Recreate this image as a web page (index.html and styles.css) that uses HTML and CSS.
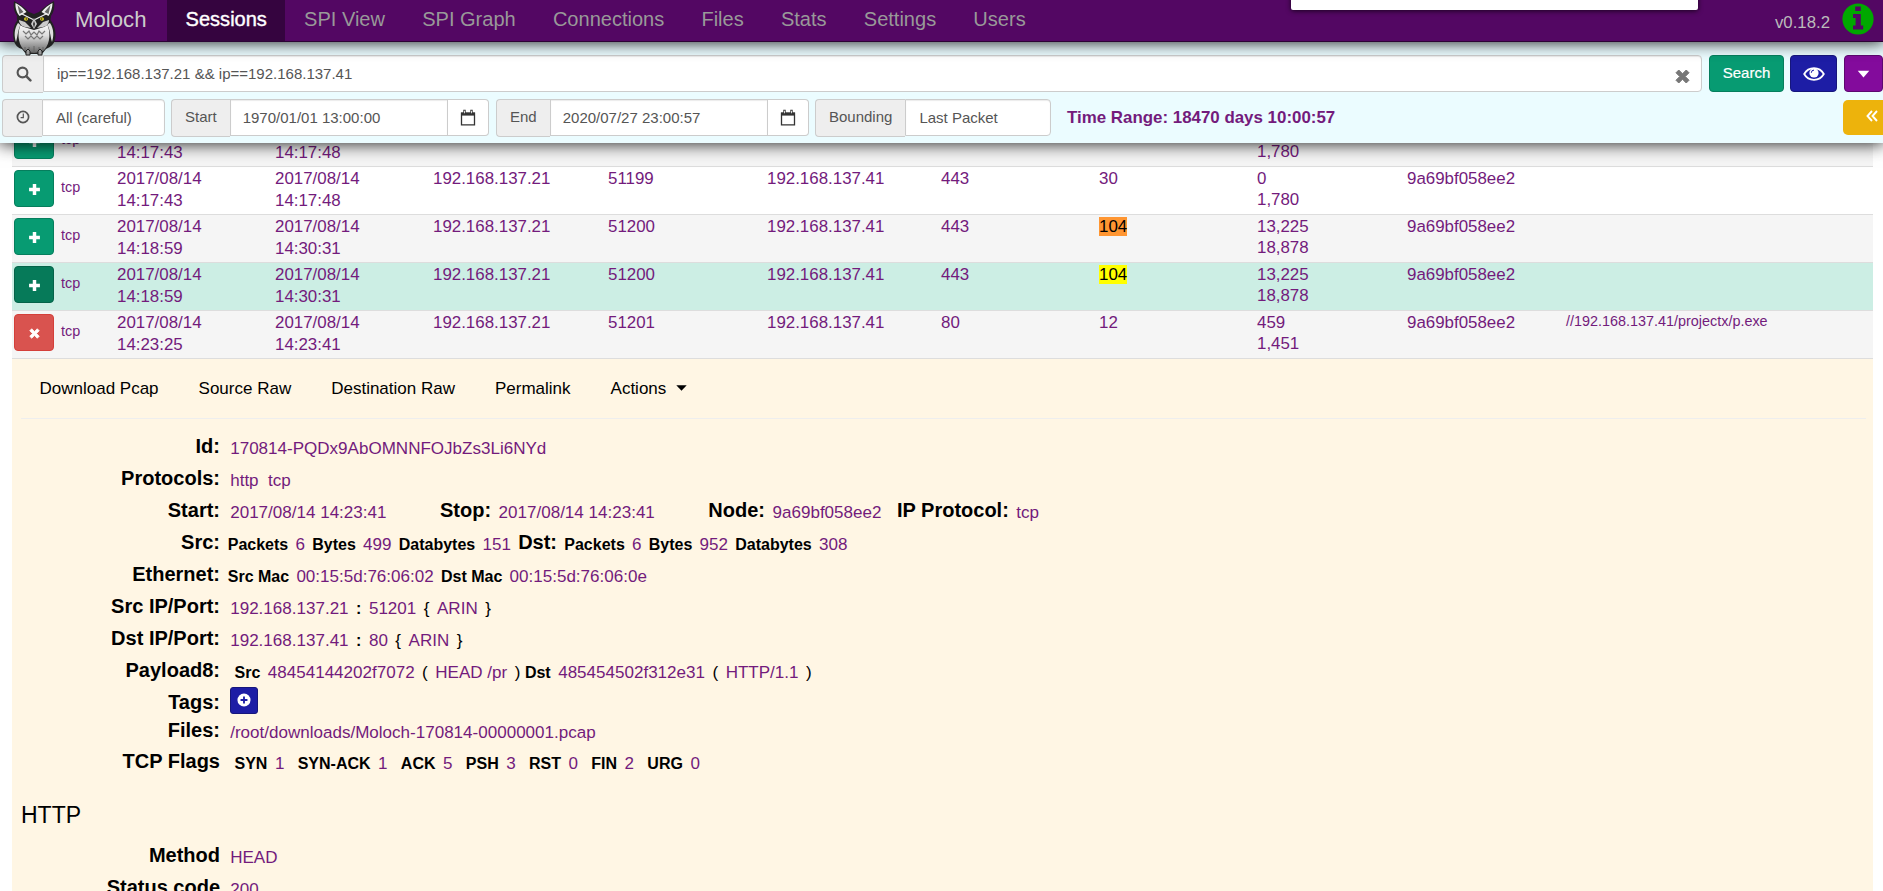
FILE: index.html
```html
<!DOCTYPE html>
<html lang="en">
<head>
<meta charset="utf-8">
<title>Moloch - Sessions</title>
<link rel="stylesheet" href="styles.css">
</head>
<body>
<svg class="defs" width="0" height="0">
  <symbol id="plus" viewBox="0 0 12 12"><path d="M4.4 1h3.2v3.4H11v3.2H7.6V11H4.4V7.6H1V4.4h3.4z"/></symbol>
  <symbol id="times" viewBox="0 0 12 12"><path d="M3 0.8 6 3.8 9 0.8 11.2 3 8.2 6l3 3L9 11.2l-3-3-3 3L.8 9l3-3-3-3z" stroke="currentColor" stroke-width=".8" stroke-linejoin="round"/></symbol>
  <symbol id="calendar" viewBox="0 0 16 17"><path d="M1.5 4.2h13v11.6h-13z" fill="none" stroke="currentColor" stroke-width="1.3"/><path d="M1 3.6h14v3H1z"/><path d="M3.3.8h2.4v4H3.3zM10.3.8h2.4v4h-2.4z"/><path d="M4.1 1.8h.8v2.4h-.8zM11.1 1.8h.8v2.4h-.8z" fill="#fff"/></symbol>
</svg>

<header class="header">
  <nav class="navbar">
    <svg class="owl" viewBox="0 0 46 56">
      <defs>
        <linearGradient id="belly" x1="0" y1="0" x2="0" y2="1"><stop offset="0" stop-color="#fff"/><stop offset=".45" stop-color="#ddd"/><stop offset="1" stop-color="#666"/></linearGradient>
      </defs>
      <path d="M9 17C2 24 1 33 3 41c1 4 4 7 8 8l4 5h16l4-5c5-2 8-5 9-9 2-8-1-17-7-23z" fill="#222"/>
      <path d="M7 23c-4 6-4 13-2 19 2-7 2-13 5-18zM39 23c4 6 4 13 2 19-2-7-2-13-5-18z" fill="#ddd"/>
      <path d="M10 24c4-3 22-3 26 0 4 8 3 19-2 25-4 5-18 5-22 0-5-6-6-17-2-25z" fill="url(#belly)"/>
      <path d="M3 1c6 3 11 7 15 11l5 2 5-2C32 8 37 4 43 1c1 6 0 11-3 15 0 5-3 9-7 11l-10 3-10-3c-5-2-8-6-7-11C3 12 2 7 3 1z" fill="#222"/>
      <path d="M4.500 3c4 2 8 5 11 9l-7 4C6 13 4 8 4.500 3zM41.500 3c-4 2-8 5-11 9l7 4c2-3 4-8 4-13z" fill="#eee"/>
      <path d="M6.500 5l6 7-4 2zM39.500 5l-6 7 4 2z" fill="#666"/>
      <path d="M8 20l6 2 6 6-6-1c-4-1-6-4-6-7zM38 20l-6 2-6 6 6-1c4-1 6-4 6-7z" fill="#ccc"/>
      <path d="M10 13.500l12 6M36 13.500l-12 6" stroke="#eee" stroke-width="1.300"/>
      <ellipse cx="15" cy="19" rx="2" ry="1.700" fill="#d9cb21"/><ellipse cx="31" cy="19" rx="2" ry="1.700" fill="#d9cb21"/>
      <circle cx="15.300" cy="19" r=".7" fill="#222"/><circle cx="30.700" cy="19" r=".7" fill="#222"/>
      <path d="M23 18l3 6-3 5-3-5z" fill="#ccc"/><path d="M23 21l1 3-1 4-1-4z" fill="#333"/>
      <path d="M12 31l3 3 3-3 2 4 3-3 3 3 2-4 3 3 3-3M14 36l3 3 3-3 3 3 3-3 3 3 3-3" fill="none" stroke="#777" stroke-width="1.200"/>
      <path d="M14 47v4M18 47v6M23 46v7M28 47v6M32 47v4" stroke="#666" stroke-width="1"/>
      <path d="M15 51l2-2 2 2v4h-4zM27 51l2-2 2 2v4h-4z" fill="#999" stroke="#222"/>
    </svg>
    <span class="brand">Moloch</span>
    <a class="tab active">Sessions</a><a class="tab">SPI View</a><a class="tab">SPI Graph</a><a class="tab">Connections</a><a class="tab">Files</a><a class="tab">Stats</a><a class="tab">Settings</a><a class="tab">Users</a>
    <div class="popup"></div>
    <span class="version">v0.18.2</span>
    <svg class="info" viewBox="0 0 32 32"><circle cx="16" cy="16" r="15.600" fill="#00a800"/><path d="M13.200 3.500h5.600v4.600h-5.600zM11 11h7.800v11.500h2.400v4H11v-4h2.600v-7.600H11z" fill="#530763"/></svg>
  </nav>

  <section class="search">
    <div class="bar">
      <div class="group query">
        <span class="addon icon-addon"><svg width="16" height="16" viewBox="0 0 16 16"><circle cx="6.500" cy="6.500" r="4.900" fill="none" stroke="#555" stroke-width="2.100"/><path d="M10.200 10.200l4.200 4.200" stroke="#555" stroke-width="2.500" stroke-linecap="round"/></svg></span>
        <div class="field grow">ip==192.168.137.21 &amp;&amp; ip==192.168.137.41<svg class="clear" width="15" height="15"><use href="#times"/></svg></div>
      </div>
      <button class="btn green">Search</button>
      <button class="btn blue"><svg width="22" height="14" viewBox="0 0 22 14"><path d="M1.200 7C5.500-.7 16.500-.7 20.800 7 16.500 14.700 5.500 14.700 1.200 7z" fill="none" stroke="#fff" stroke-width="1.800"/><circle cx="11" cy="5.900" r="4.600" fill="#fff"/><path d="M8.300 5.800a2.700 2.700 0 0 1 2.700-2.700" fill="none" stroke="#1d1da5" stroke-width="1"/></svg></button>
      <button class="btn purple"><svg width="13" height="8" viewBox="0 0 14 9"><path d="M.5.800h13L7 8.300z" fill="#fff"/></svg></button>
    </div>
    <div class="bar second">
      <div class="group range"><span class="addon clock"><svg width="14" height="14" viewBox="0 0 14 14"><circle cx="7" cy="7" r="5.600" fill="none" stroke="#555" stroke-width="1.700"/><path d="M7.300 3.600v4H4.600" fill="none" stroke="#555" stroke-width="1.200"/></svg></span><div class="field grow">All (careful)</div></div>
      <div class="group start"><span class="addon">Start</span><div class="field grow date">1970/01/01 13:00:00</div><span class="cal"><svg width="16" height="17"><use href="#calendar"/></svg></span></div>
      <div class="group end"><span class="addon">End</span><div class="field grow date">2020/07/27 23:00:57</div><span class="cal"><svg width="16" height="17"><use href="#calendar"/></svg></span></div>
      <div class="group bounding"><span class="addon">Bounding</span><div class="field grow">Last Packet</div></div>
      <strong class="timerange">Time Range: 18470 days 10:00:57</strong>
      <button class="toggle"><svg width="12" height="12" viewBox="0 0 12 12"><path d="M6 1L1.500 6 6 11M11 1L6.500 6 11 11" fill="none" stroke="#fff" stroke-width="1.900"/></svg></button>
    </div>
  </section>
</header>

<main class="main">
  <div class="rows">
    <div class="row alt"><div class="ctl"><span class="open"><svg><use href="#plus"/></svg></span><span class="proto">tcp</span></div><div>2017/08/14<br>14:17:43</div><div>2017/08/14<br>14:17:48</div><div></div><div></div><div></div><div></div><div></div><div class="bytes">0<br>1,780</div><div></div><div></div></div>
    <div class="row"><div class="ctl"><span class="open"><svg><use href="#plus"/></svg></span><span class="proto">tcp</span></div><div>2017/08/14<br>14:17:43</div><div>2017/08/14<br>14:17:48</div><div>192.168.137.21</div><div>51199</div><div>192.168.137.41</div><div>443</div><div>30</div><div class="bytes">0<br>1,780</div><div>9a69bf058ee2</div><div></div></div>
    <div class="row alt"><div class="ctl"><span class="open"><svg><use href="#plus"/></svg></span><span class="proto">tcp</span></div><div>2017/08/14<br>14:18:59</div><div>2017/08/14<br>14:30:31</div><div>192.168.137.21</div><div>51200</div><div>192.168.137.41</div><div>443</div><div><mark class="current">104</mark></div><div class="bytes">13,225<br>18,878</div><div>9a69bf058ee2</div><div></div></div>
    <div class="row hover"><div class="ctl"><span class="open"><svg><use href="#plus"/></svg></span><span class="proto">tcp</span></div><div>2017/08/14<br>14:18:59</div><div>2017/08/14<br>14:30:31</div><div>192.168.137.21</div><div>51200</div><div>192.168.137.41</div><div>443</div><div><mark>104</mark></div><div class="bytes">13,225<br>18,878</div><div>9a69bf058ee2</div><div></div></div>
    <div class="row alt"><div class="ctl"><span class="open close"><svg><use href="#times"/></svg></span><span class="proto">tcp</span></div><div>2017/08/14<br>14:23:25</div><div>2017/08/14<br>14:23:41</div><div>192.168.137.21</div><div>51201</div><div>192.168.137.41</div><div>80</div><div>12</div><div class="bytes">459<br>1,451</div><div>9a69bf058ee2</div><div class="uri">//192.168.137.41/projectx/p.exe</div></div>
  </div>

  <section class="detail">
    <div class="actions"><a>Download Pcap</a><a>Source Raw</a><a>Destination Raw</a><a>Permalink</a><a>Actions<svg class="caret" width="11" height="6" viewBox="0 0 11 6"><path d="M.3.300h10.400L5.500 5.800z"/></svg></a></div>
    <div class="info-row"><b class="label">Id:</b><i>170814-PQDx9AbOMNNFOJbZs3Li6NYd</i></div>
    <div class="info-row"><b class="label">Protocols:</b><i>http</i><i class="near">tcp</i></div>
    <div class="info-row"><b class="label">Start:</b><i>2017/08/14 14:23:41</i><b class="big far">Stop:</b><i>2017/08/14 14:23:41</i><b class="big far">Node:</b><i>9a69bf058ee2</i><b class="big mid">IP Protocol:</b><i>tcp</i></div>
    <div class="info-row tight"><b class="label">Src:</b><b>Packets</b><i>6</i><b>Bytes</b><i>499</i><b>Databytes</b><i>151</i><b class="big">Dst:</b><b>Packets</b><i>6</i><b>Bytes</b><i>952</i><b>Databytes</b><i>308</i></div>
    <div class="info-row tight"><b class="label">Ethernet:</b><b>Src Mac</b><i>00:15:5d:76:06:02</i><b>Dst Mac</b><i>00:15:5d:76:06:0e</i></div>
    <div class="info-row"><b class="label">Src IP/Port:</b><i>192.168.137.21</i><b>:</b><i>51201</i><span>{</span><i>ARIN</i><span>}</span></div>
    <div class="info-row"><b class="label">Dst IP/Port:</b><i>192.168.137.41</i><b>:</b><i>80</i><span>{</span><i>ARIN</i><span>}</span></div>
    <div class="info-row loose"><b class="label">Payload8:</b><b>Src</b><i>48454144202f7072</i><span>(</span><i>HEAD /pr</i><span>)</span><b class="joined">Dst</b><i>485454502f312e31</i><span>(</span><i>HTTP/1.1</i><span>)</span></div>
    <div class="info-row tags"><b class="label">Tags:</b><span class="addtag"><svg width="14" height="14" viewBox="0 0 15 15"><circle cx="7.500" cy="7.500" r="7" fill="#fff"/><path d="M7.500 3.800v7.400M3.800 7.500h7.400" stroke="#1d1da5" stroke-width="2"/></svg></span></div>
    <div class="info-row files"><b class="label">Files:</b><i>/root/downloads/Moloch-170814-00000001.pcap</i></div>
    <div class="info-row loose flags"><b class="label">TCP Flags</b><b>SYN</b><i>1</i><b>SYN-ACK</b><i>1</i><b>ACK</b><i>5</i><b>PSH</b><i>3</i><b>RST</b><i>0</i><b>FIN</b><i>2</i><b>URG</b><i>0</i></div>
    <h4>HTTP</h4>
    <div class="info-row"><b class="label">Method</b><i>HEAD</i></div>
    <div class="info-row"><b class="label">Status code</b><i>200</i></div>
  </section>
</main>
</body>
</html>
```
FILE: styles.css
```css
* { box-sizing: border-box; }
body { margin: 0; height: 891px; overflow: hidden; background: #fff; color: #000; font-family: "Liberation Sans", Arial, sans-serif; font-size: 16.8px; }
.defs { display: block; position: absolute; }
svg { fill: currentColor; flex: none; }

.header { position: relative; z-index: 2; }
.navbar { position: relative; z-index: 3; display: flex; height: 42px; background: #530763; border-bottom: 1px solid #2c0335; box-shadow: 0 0 16px 1px rgba(0,0,0,.85); }
.owl { position: absolute; left: 11px; top: 0; width: 46px; height: 56px; }
.brand { width: 167px; padding-left: 75px; font-size: 22.200px; line-height: 40px; color: #ccc; }
.tab { padding: 0 18.600px; height: 41px; font-size: 20.050px; line-height: 39px; color: #999; }
.tab.active { background: #35043f; color: #fff; -webkit-text-stroke: .4px #fff; }
.popup { position: absolute; left: 1291px; top: -10px; width: 407px; height: 20px; background: #fff; border-radius: 2px; box-shadow: 0 1px 5px rgba(0,0,0,.7); }
.version { margin-left: auto; margin-right: 12px; line-height: 45px; color: #bbb; }
.info { width: 32px; height: 32px; margin: 3px 9px 0 0; }

.search { position: relative; z-index: 2; height: 101px; padding: 13px 0 0 2px; background: #ebfcff; box-shadow: 0 0 16px 1px rgba(0,0,0,.85); font-size: 15px; color: #555; }
.bar { display: flex; height: 37px; }
.group { display: flex; }
.query { width: 1700px; margin-right: 7px; }
.grow { flex: 1; }
.addon { padding: 0 13px; background: #eee; border: 1px solid #ccc; border-right: 0; border-radius: 4px 0 0 4px; line-height: 34px; height: 38px; }
.icon-addon { width: 41px; padding: 10px 0 0 13px; line-height: 1; }
.clock { width: 40px; padding: 10px 0 0 13px; line-height: 1; }
.field { display: flex; justify-content: space-between; height: 37px; padding-left: 13px; line-height: 36px; background: #fff; border: 1px solid #ccc; border-radius: 0 4px 4px 0; box-shadow: inset 0 1px 1px rgba(0,0,0,.08); }
.date { border-radius: 0; padding-left: 12px; }
.clear { margin: 13px 11px 0 0; color: #777; }
.btn { display: flex; align-items: center; justify-content: center; height: 37px; padding: 0; border: 1px solid; border-radius: 4px; color: #fff; font: 15px "Liberation Sans", Arial, sans-serif; flex: none; }
.green { width: 75px; margin-right: 6px; background: #079b72; border-color: #067e5d; -webkit-text-stroke: .2px #fff; padding-bottom: 2px; }
.blue { width: 47px; margin-right: 7px; background: #1d1da5; border-color: #16167c; }
.purple { width: 39px; background: #830b9c; border-color: #5d0870; }
.second { margin-top: 7px; }
.range { width: 163px; margin-right: 6px; }
.start { width: 318px; margin-right: 7px; }
.end { width: 313px; margin-right: 6px; }
.bounding { width: 236px; margin-right: 16px; }
.cal { width: 41px; height: 37px; padding: 9px 0 0 12px; border: 1px solid #ccc; border-left: 0; border-radius: 0 4px 4px 0; background: #fff; color: #333; }
.timerange { font-size: 16.900px; line-height: 38px; color: #731b7c; }
.toggle { width: 40px; height: 35px; margin: 1px 0 0 auto; padding: 0 0 0 17px; border: 0; border-radius: 5px 0 0 5px; background: #edb30c; line-height: 1; }

.main { height: 748px; overflow: hidden; padding: 0 10px 0 12px; }
.rows { margin-top: -25px; }
.row { display: grid; grid-template-columns: 105px 158px 158px 175px 159px 174px 158px 158px 150px 159px 1fr; height: 48px; border-top: 1px solid #ddd; line-height: 22px; color: #731b7c; font-size: 16.900px; }
.row > div { padding-top: 1px; }
.alt { background: #f5f5f5; }
.hover { background: #cceee4; }
.row > .ctl { display: flex; padding: 3px 0 0 2px; }
.open { display: flex; align-items: center; justify-content: center; width: 40px; height: 37px; border: 1px solid #067e5d; border-radius: 4px; background: #079b72; color: #fff; }
.open svg { width: 13px; height: 13px; margin-top: 2px; }
.hover .open { background: #067a59; border-color: #056349; }
.open.close { background: #d9534f; border-color: #d43f3a; }
.close svg { width: 11px; height: 11px; }
.proto { margin-left: 7px; font-size: 14.400px; line-height: 35px; }
.row > .bytes { line-height: 21px; }
.row > .uri { font-size: 14.400px; line-height: 21px; padding-top: 0; }
mark { background: #ff0; color: #000; }
mark.current { background: #ff9632; }

.detail { height: 600px; padding: 0 7px 0 9px; border-top: 1px solid #ddd; background: #fff6e4; font-size: 17.050px; }
.actions { display: flex; gap: 40px; height: 60px; margin-bottom: 11px; padding: 0 0 0 18.500px; line-height: 60px; border-bottom: 1px solid #eee; font-size: 17px; }
.caret { margin-left: 10px; vertical-align: 3px; }
.info-row { display: flex; align-items: baseline; gap: 7.500px; height: 32px; line-height: 32px; }
.info-row i { font-style: normal; color: #731b7c; position: relative; top: 1px; }
.info-row span, .info-row b:not(.label):not(.big) { position: relative; top: 1px; }
.info-row b { font-size: 16px; }
.info-row .label { width: 199px; margin-right: 2.700px; text-align: right; font-size: 20px; }
.info-row .big { font-size: 20px; }
.far { margin-left: 46px; }
.mid { margin-left: 8px; }
.near { margin-left: 2px; }
.tight { gap: 7.250px; }
.tight .label { margin-right: .5px; }
.loose .label { margin-right: 7px; }
.joined { margin-left: -3px; }
.flags i { margin-right: 5.800px; }
.flags { margin-top: -1px; }
.info-row.tags { height: 28px; align-items: flex-start; }
.info-row .addtag { display: flex; align-items: center; justify-content: center; width: 28px; height: 27px; top: 1px; padding-bottom: 1px; background: #1d1da5; border: 1px solid #16167c; border-radius: 3px; }
h4 { margin: 22px 0 8px; font-size: 23px; font-weight: 400; line-height: 32px; }
```
